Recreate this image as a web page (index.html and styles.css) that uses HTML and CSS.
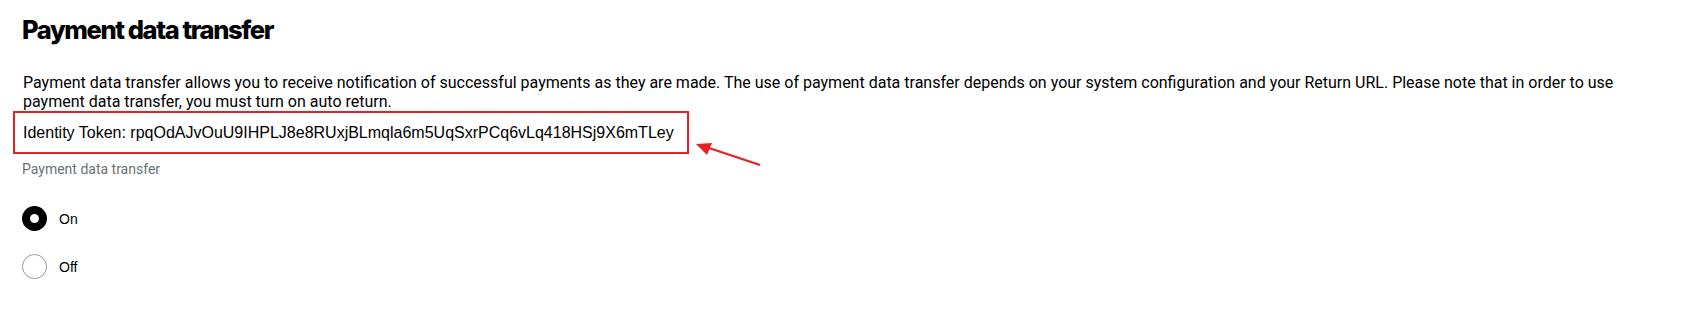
FILE: index.html
```html
<!DOCTYPE html>
<html>

<head>
    <title>Payment data transfer</title>
    <link rel="stylesheet" href="styles.css">
</head>

<body>
    <div class="container">
        <h2 class="section-title">Payment data transfer</h2>
        <p class="intro">Payment data transfer allows you to receive notification of successful payments as they are made. The use of payment data transfer depends on your system configuration and your Return URL. Please note that in order to use payment data transfer, you must turn on auto return.</p>

        <div class="token-wrap">
            <div class="token-box">Identity Token: rpqOdAJvOuU9IHPLJ8e8RUxjBLmqla6m5UqSxrPCq6vLq418HSj9X6mTLey</div>
            <svg class="arrow" width="70" height="30" viewBox="0 0 70 30">
                <line x1="66" y1="26" x2="12" y2="8" stroke="#e32227" stroke-width="2.2" />
                <polygon points="2,5 18,4 13,16" fill="#e32227" />
            </svg>
        </div>

        <div class="field-label">Payment data transfer</div>

        <div class="radio-group">
            <label class="radio-row">
                <span class="radio checked"></span>
                <span class="radio-text">On</span>
            </label>
            <label class="radio-row">
                <span class="radio"></span>
                <span class="radio-text">Off</span>
            </label>
        </div>
    </div>
</body>

</html>
```

FILE: styles.css
```css
body {
    margin: 0;
    background-color: #fff;
    color: #000;
}

.container {
    padding: 14px 30px 0 22px;
}

.section-title {
    font-family: "Inter", sans-serif;
    font-weight: 800;
    font-size: 25.5px;
    letter-spacing: -1.4px;
    line-height: 32px;
    margin: 0 0 28px 0;
}

.intro {
    font-family: "Roboto", sans-serif;
    font-size: 16px;
    line-height: 18.5px;
    margin: 0 0 0 1px;
    color: #000;
}

.token-wrap {
    position: relative;
    display: inline-block;
    margin-left: -9px;
}

.token-box {
    border: 2px solid #e32227;
    padding: 10px 13px 9px 8px;
    font-family: "Liberation Sans", sans-serif;
    font-size: 16px;
    line-height: 20px;
    color: #000;
}

.arrow {
    position: absolute;
    left: 681px;
    top: 28px;
}

.field-label {
    font-family: "Roboto", sans-serif;
    font-size: 14px;
    color: #687173;
    margin-top: 7px;
    line-height: 16px;
}

.radio-group {
    margin-top: 29px;
}

.radio-row {
    display: flex;
    align-items: center;
    gap: 12px;
    height: 25px;
    margin-bottom: 23px;
}

.radio {
    width: 25px;
    height: 25px;
    box-sizing: border-box;
    border-radius: 50%;
    border: 1px solid #9a9a9a;
    background: #fff;
}

.radio.checked {
    border: 8px solid #000;
}

.radio-text {
    font-family: "Liberation Sans", sans-serif;
    font-size: 14px;
}
```
